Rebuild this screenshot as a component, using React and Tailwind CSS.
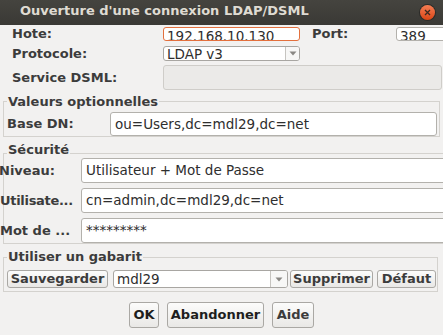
import React from 'react'

const frame = 'border-[#d4d2ce]'
const btn =
  'flex items-center justify-center rounded-[3px] border border-[#aaa8a4] bg-linear-to-b from-[#fcfcfb] to-[#e9e8e6] font-bold text-[13px] leading-[16px]'

function Arrow() {
  return (
    <svg width="8" height="5" viewBox="0 0 8 5">
      <path d="M0.5 0.5 L7.5 0.5 L4 4.5 Z" fill="#8a8884" />
    </svg>
  )
}

function Legend({ title, line }) {
  return (
    <div className="flex h-[15px]">
      <div className={`w-[4px] self-end border-l border-t ${frame} ${line}`} />
      <span className="px-[1px] text-[13px] font-bold leading-[15px] text-[#3c3c3c]">{title}</span>
      <div className={`flex-1 self-end border-r border-t ${frame} ${line}`} />
    </div>
  )
}

function Field({ label, value, clip }) {
  return (
    <div className="flex h-[25px] items-center">
      <div className={`-ml-[4px] w-[81px] shrink-0 whitespace-nowrap text-[13px] font-bold text-[#3c3c3c] ${clip}`}>
        {label}
      </div>
      <div className="flex h-[25px] w-[400px] items-center rounded-[3px] border border-[#b3b1ac] bg-white pl-[4px] text-[13.5px] text-[#2e2e2e]">
        {value}
      </div>
    </div>
  )
}

export default function App() {
  return (
    <div className="h-[335px] w-[443px] overflow-hidden bg-[#f2f1f0] font-['DejaVu_Sans',sans-serif] text-[#3c3c3c]">
      <div className="flex h-[25px] items-start justify-between bg-linear-to-b from-[#45443f] to-[#3a3935]">
        <span className="pl-[20px] pt-[3px] text-[13px] font-bold leading-[15px] text-[#dfdbd2]">
          Ouverture d'une connexion LDAP/DSML
        </span>
        <div className="mr-[8px] mt-[5px] flex h-[15px] w-[15px] items-center justify-center rounded-full bg-linear-to-b from-[#f57d52] to-[#d9440f] shadow-[0_0_0_1px_#2c2b28]">
          <svg width="7" height="7" viewBox="0 0 7 7">
            <path d="M1 1 L6 6 M6 1 L1 6" stroke="#3a2a22" strokeWidth="1.3" />
          </svg>
        </div>
      </div>

      <div className="mt-[2px] flex h-[14px] items-start">
        <div className="w-[163px] shrink-0 pl-[12px] text-[13px] font-bold leading-[14px]">Hote:</div>
        <div className="h-[14px] w-[137px] shrink-0 overflow-hidden rounded-[3px] border border-[#e3703d] bg-white pl-[3px] text-[13.5px] leading-[16px] text-[#2e2e2e]">
          192.168.10.130
        </div>
        <div className="ml-[12px] w-[84px] shrink-0 text-[13px] font-bold leading-[14px]">Port:</div>
        <div className="h-[14px] w-[60px] shrink-0 overflow-hidden rounded-[3px] border border-[#b3b1ac] bg-white pl-[3px] text-[13.5px] leading-[16px] text-[#2e2e2e]">
          389
        </div>
      </div>

      <div className="mt-[5px] flex h-[15px] items-center">
        <div className="w-[163px] shrink-0 pl-[12px] text-[13px] font-bold leading-[15px]">Protocole:</div>
        <div className="flex h-[15px] w-[137px] shrink-0 overflow-hidden rounded-[3px] border border-[#a8a6a2] bg-white">
          <span className="flex-1 pl-[3px] text-[13.5px] leading-[14px] text-[#2e2e2e]">LDAP v3</span>
          <div className="flex w-[14px] items-center justify-center border-l border-[#c6c4c0] bg-[#f7f7f6]">
            <Arrow />
          </div>
        </div>
      </div>

      <div className="mt-[4px] flex h-[25px] items-center">
        <div className="w-[163px] shrink-0 pl-[12px] text-[13px] font-bold leading-[15px]">Service DSML:</div>
        <div className="h-[25px] w-[279px] shrink-0 rounded-[3px] border border-[#cfcdc9] bg-[#ebeae8]" />
      </div>

      <div className="ml-[3px] mt-[4px] w-[437px]">
        <Legend title="Valeurs optionnelles" line="h-[8px]" />
        <div className={`border-x border-b ${frame} pl-[3px] pr-[2px] pt-[3px]`}>
          <div className="flex h-[24px] items-center">
            <div className="w-[103px] shrink-0 text-[13px] font-bold">Base DN:</div>
            <div className="flex h-[24px] flex-1 items-center rounded-[3px] border border-[#b3b1ac] bg-white pl-[4px] text-[13.5px] text-[#2e2e2e]">
              ou=Users,dc=mdl29,dc=net
            </div>
          </div>
        </div>
      </div>

      <div className="ml-[3px] mt-[5px] w-[470px]">
        <Legend title="Sécurité" line="h-[4px]" />
        <div className={`flex flex-col gap-[5px] border-x border-b ${frame} pt-[1px]`}>
          <Field label="Niveau:" value="Utilisateur + Mot de Passe" clip="-translate-x-[1px]" />
          <Field label="Utilisate..." value="cn=admin,dc=mdl29,dc=net" clip="tracking-[-0.3px]" />
          <Field label="Mot de ..." value="*********" clip="" />
        </div>
      </div>

      <div className="ml-[3px] mt-[5px] w-[435px]">
        <Legend title="Utiliser un gabarit" line="h-[7px]" />
        <div className={`border-x border-b ${frame} pb-[3px] pl-[3px] pt-[6px]`}>
          <div className="flex h-[18px] items-stretch">
            <div className={`${btn} w-[101px]`}>Sauvegarder</div>
            <div className="ml-[5px] flex w-[175px] overflow-hidden rounded-[3px] border border-[#a8a6a2] bg-white">
              <span className="flex-1 pl-[3px] text-[13.5px] leading-[16px] text-[#2e2e2e]">mdl29</span>
              <div className="flex w-[17px] items-center justify-center border-l border-[#c6c4c0] bg-[#f7f7f6]">
                <Arrow />
              </div>
            </div>
            <div className={`${btn} ml-[2px] w-[83px]`}>Supprimer</div>
            <div className={`${btn} ml-[4px] w-[59px]`}>Défaut</div>
          </div>
        </div>
      </div>

      <div className="mt-[10px] flex justify-center gap-[8px]">
        <div className={`${btn} h-[26px] w-[30px] text-[#1e1e1e]`}>OK</div>
        <div className={`${btn} h-[26px] w-[97px] text-[#1e1e1e]`}>Abandonner</div>
        <div className={`${btn} h-[26px] w-[42px]`}>Aide</div>
      </div>
    </div>
  )
}
